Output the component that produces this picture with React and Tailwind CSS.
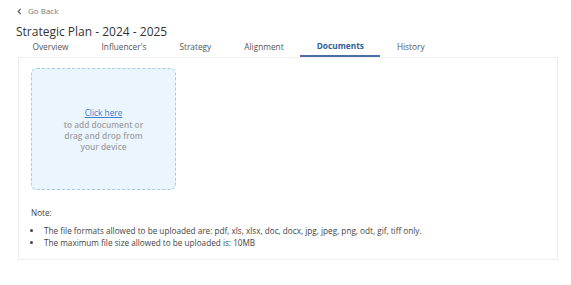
const tabs = ["Overview", "Influencer's", "Strategy", "Alignment", "Documents", "History"];

export default function App() {
  const active = "Documents";
  return (
    <div className="min-h-[285px] w-[571px] bg-white text-[#333] font-['Open_Sans',sans-serif]">
      <div className="px-4 pt-[5px]">
        <button className="flex items-center gap-[5px] text-[8px] leading-[12px] text-[#777]">
          <svg width="7" height="7" viewBox="0 0 8 8" fill="none" stroke="#555" strokeWidth="1.3">
            <path d="M5.5 1 L2.5 4 L5.5 7" />
          </svg>
          Go Back
        </button>
        <h1 className="mt-[8px] text-[12px] leading-[14px] text-[#333]">Strategic Plan - 2024 - 2025</h1>
      </div>

      <div className="flex pl-4">
        {tabs.map((t) => (
          <div
            key={t}
            className={
              t === active
                ? "px-[16.5px] pt-[1px] pb-[3px] text-[8.3px] leading-[12px] font-bold text-[#2f5f9a] border-b-2 border-[#4a6fa5]"
                : "px-[16.5px] pt-[2px] pb-[2px] text-[8.3px] leading-[12px] text-[#555] border-b-2 border-transparent"
            }
          >
            {t}
          </div>
        ))}
      </div>

      <div className="ml-[18px] mr-[13px] h-[203px] border border-[#efefef] px-3 pt-[10px]">
        <div className="w-[145px] h-[122px] rounded-[6px] border border-dashed border-[#a7cbea] bg-[#eaf5fe] flex flex-col items-center justify-center text-center text-[8.3px] leading-[11px]">
          <a className="mb-[1px] text-[#3f7fd0] underline cursor-pointer">Click here</a>
          <span className="font-semibold text-[#a2a2a2] px-[26px]">
            to add document or drag and drop from your device
          </span>
        </div>

        <p className="mt-[17px] text-[8.2px] leading-[12px] text-[#444]">Note:</p>
        <ul className="mt-[6px] list-disc pl-[12px] text-[8.2px] leading-[12px] text-[#444]">
          <li className="pl-[1px]">The file formats allowed to be uploaded are: pdf, xls, xlsx, doc, docx, jpg, jpeg, png, odt, gif, tiff only.</li>
          <li className="pl-[1px]">The maximum file size allowed to be uploaded is: 10MB</li>
        </ul>
      </div>
    </div>
  );
}
